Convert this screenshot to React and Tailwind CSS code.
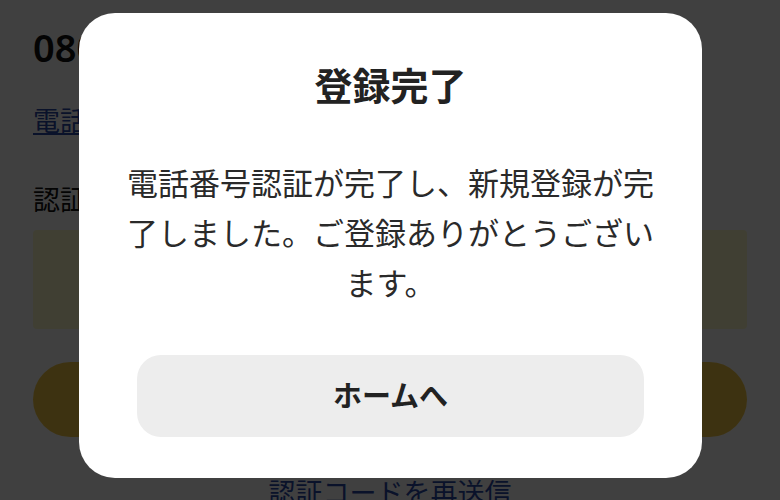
import { useState } from "react";

function VerifyPage() {
  return (
    <div className="min-h-[500px] bg-white px-[33px] pt-[22px] text-[#111]">
      <p className="text-[38px] font-semibold leading-[50px]">080-1234-5678</p>
      <a className="mt-[31px] block text-[27px] leading-[36px] text-[#2b4aa8] underline" href="#">
        電話番号を変更する
      </a>
      <p className="mt-[43px] text-[27px] leading-[36px]">認証コード</p>
      <div className="mt-[12px] h-[99px] w-full rounded-[4px] bg-[#fdfbcc]" />
      <button className="mt-[33px] h-[75px] w-full rounded-full bg-[#f4c844] text-[26px] font-bold" type="button">
        認証する
      </button>
      <a className="mt-[38px] block text-center text-[27px] leading-[36px] text-[#2b4aa8] underline" href="#">
        認証コードを再送信
      </a>
    </div>
  );
}

function CompleteModal({ onClose }) {
  return (
    <div className="fixed inset-0 bg-black/75">
      <div className="absolute left-[79px] top-[13px] w-[623px] rounded-[36px] bg-white px-[41px] pb-[41px] pt-[50px] text-center">
        <h2 className="text-[38px] font-bold leading-[44px] text-[#222]">登録完了</h2>
        <p className="mt-[51px] text-[31px] leading-[50px] text-[#2a2a2a]">
          電話番号認証が完了し、新規登録が完了しました。ご登録ありがとうございます。
        </p>
        <button
          className="mx-auto mt-[47px] block h-[82px] w-[507px] rounded-[24px] bg-[#ededed] text-[29px] font-bold text-[#222]"
          onClick={onClose}
          type="button"
        >
          ホームへ
        </button>
      </div>
    </div>
  );
}

export default function App() {
  const [open, setOpen] = useState(true);

  return (
    <div className="relative h-[500px] w-[780px] overflow-hidden font-['Noto_Sans','Noto_Sans_CJK_JP',sans-serif]">
      <VerifyPage />
      {open ? <CompleteModal onClose={() => setOpen(false)} /> : null}
    </div>
  );
}
